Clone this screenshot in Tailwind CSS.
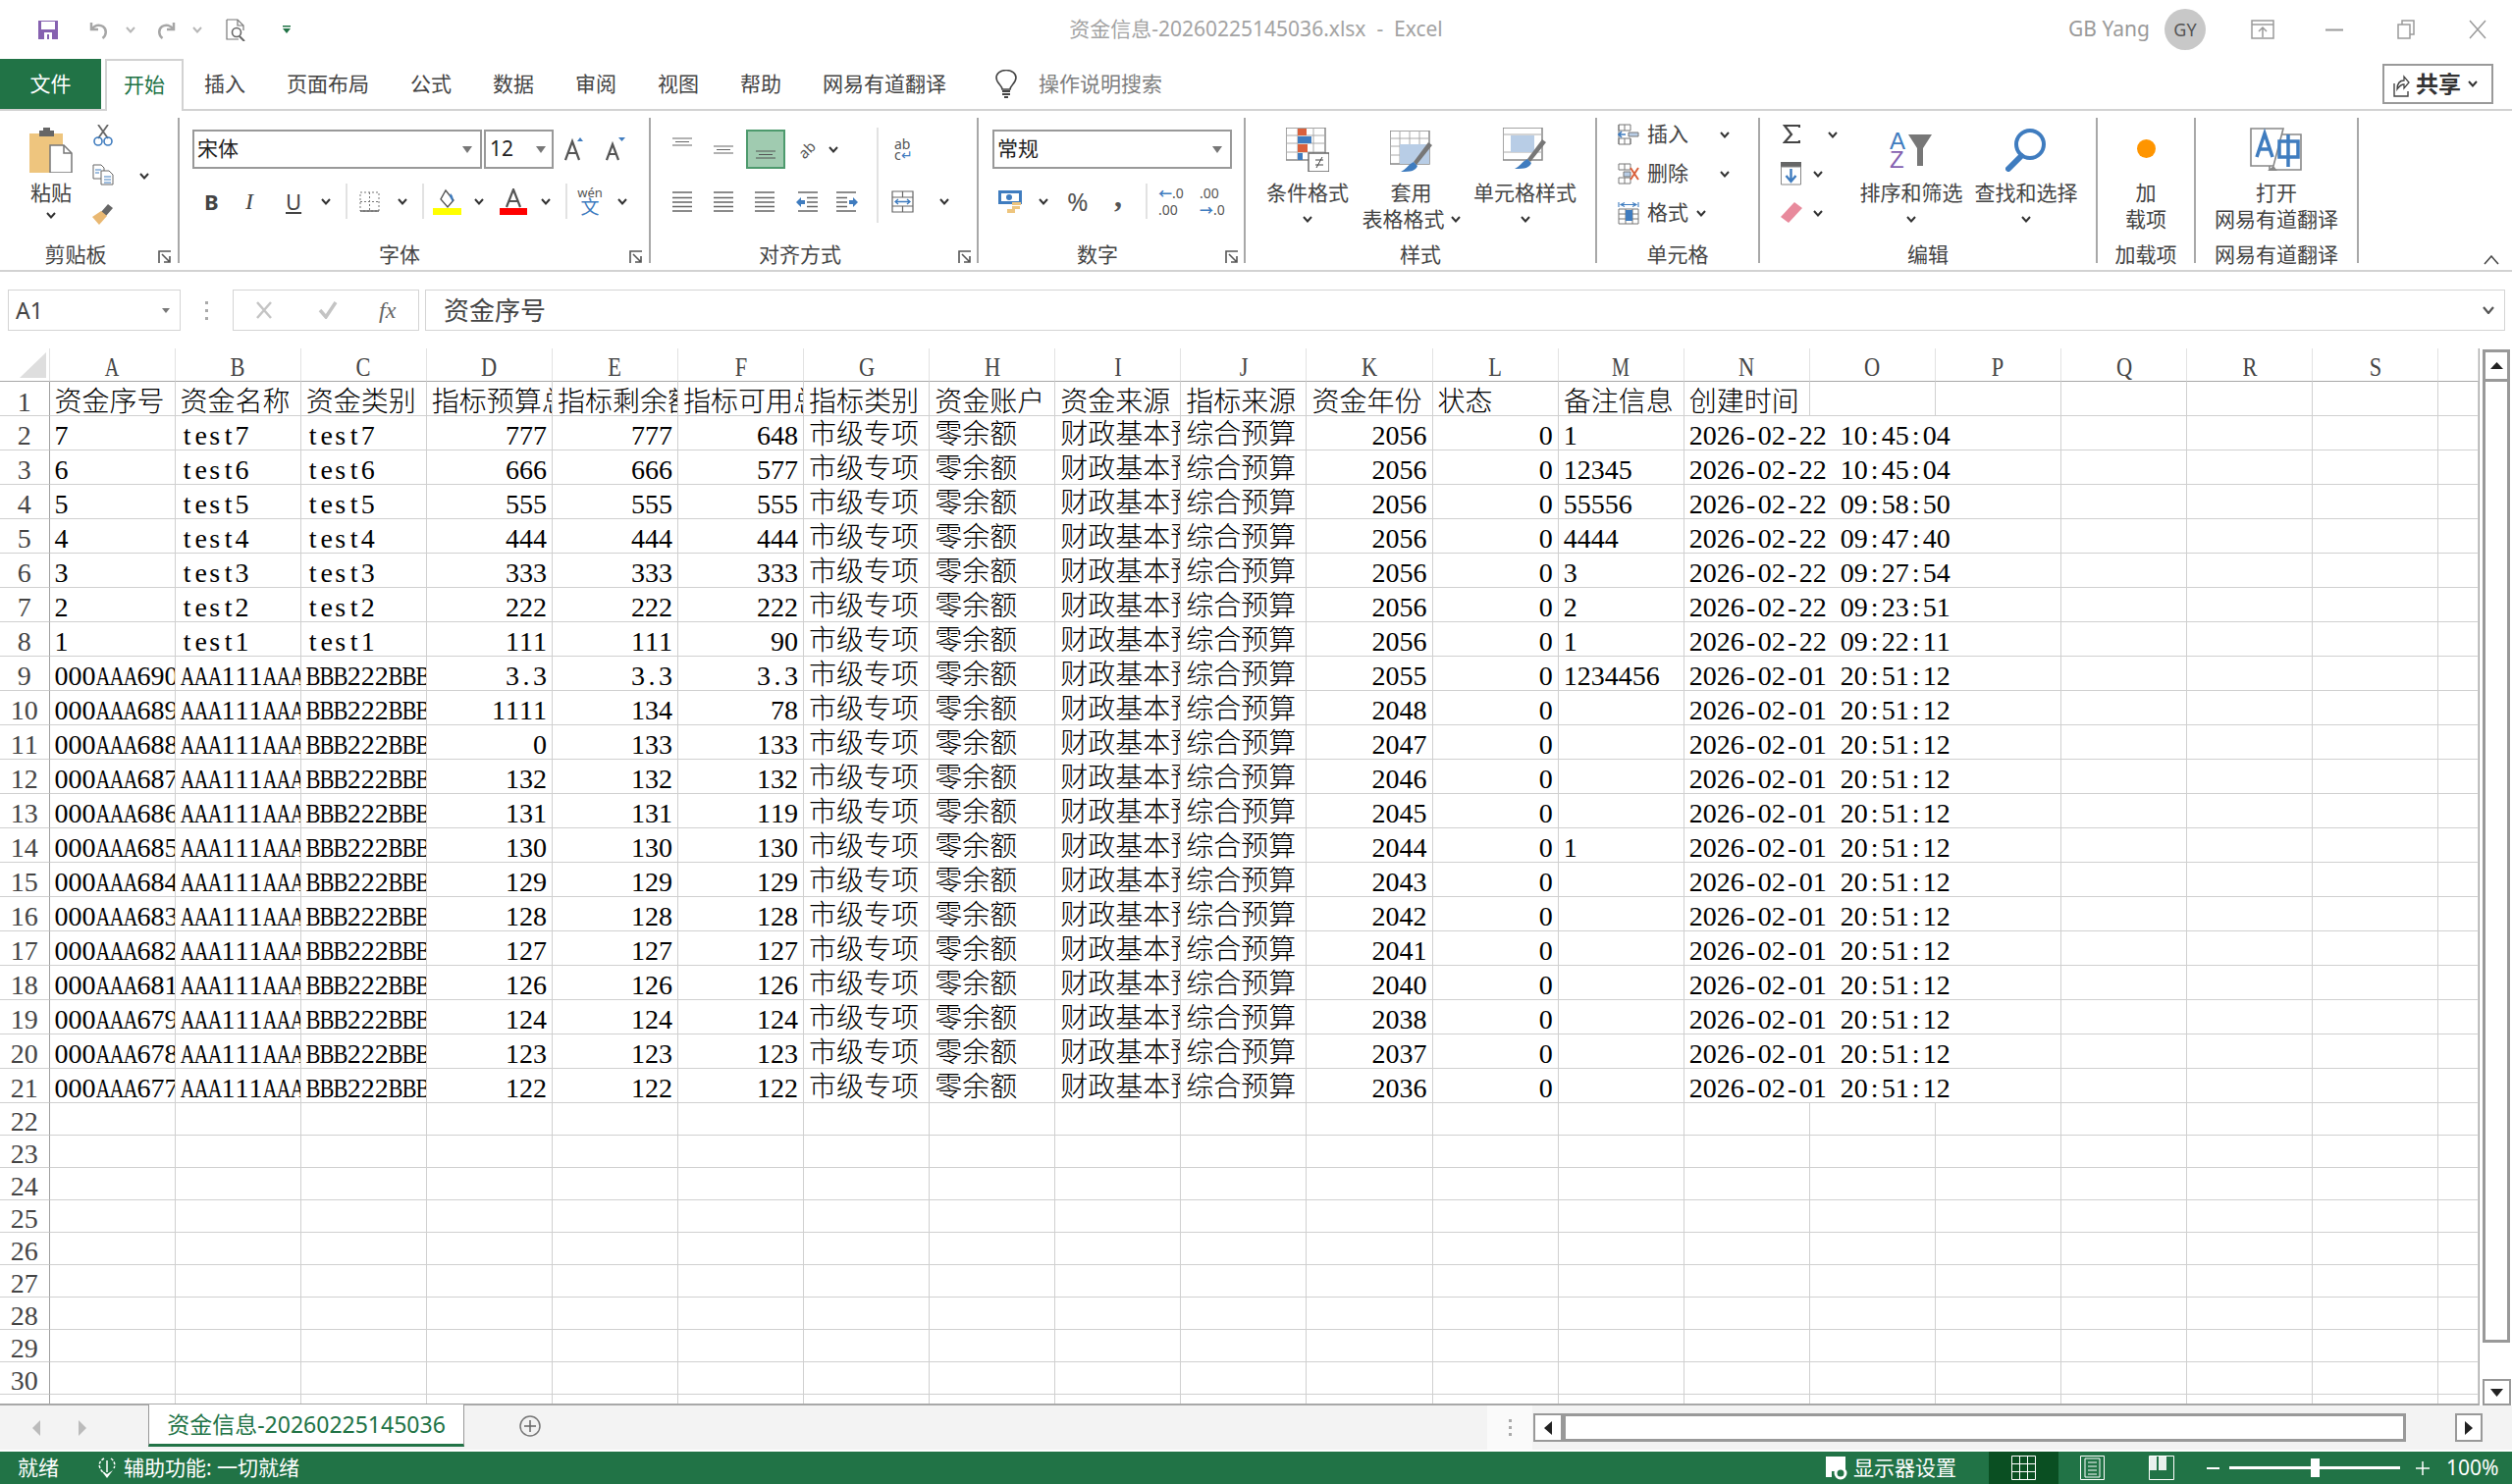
<!DOCTYPE html>
<html lang="zh-CN">
<head>
<meta charset="utf-8">
<script src="https://cdn.jsdelivr.net/npm/@tailwindcss/browser@4"></script>
<title>Excel</title>
</head>
<body class="w-[2559px] h-[1512px] overflow-hidden bg-white text-[21px] text-[#444] font-['Noto_Sans','Noto_Sans_CJK_SC',sans-serif]">
<svg class="hidden">
  <symbol id="chev" viewBox="0 0 10 7"><path d="M1 1l4 4.5L9 1" fill="none" stroke="#333" stroke-width="2"/></symbol>
  <symbol id="launch" viewBox="0 0 14 14"><path d="M1 13V1h12" fill="none" stroke="#555" stroke-width="1.600"/><path d="M4 4l8 8M12 6v6H6" fill="none" stroke="#555" stroke-width="1.600"/></symbol>
  <symbol id="lines" viewBox="0 0 20 21"><path d="M0 1h20M0 6.500h20M0 11h20M0 15.500h20M0 20h20" stroke="#666" stroke-width="1.500"/></symbol>
</svg>

<!-- title bar -->
<div class="flex h-[60px] items-center">
  <div class="flex flex-1 items-center">
    <svg class="ml-[39px] w-[20px] h-[20px]" viewBox="0 0 20 20"><path d="M0 1h20v19H0z" fill="#8661b0"/><path d="M3 2h14v8H3z" fill="#fff"/><path d="M6 13h8v7H6z" fill="#fff"/><path d="M9 15h2v5H9z" fill="#8661b0"/></svg>
    <svg class="ml-[31px] w-[21px] h-[21px]" viewBox="0 0 21 21"><path d="M3 3v7h7M3.500 10C6 5.500 11 4.500 15 7c4 3 3.500 9-.5 12" fill="none" stroke="#a6a6a6" stroke-width="2.500"/></svg>
    <svg class="ml-[17px] w-[10px] h-[7px]"><use href="#chev" opacity=".35"/></svg>
    <svg class="ml-[21px] w-[21px] h-[21px]" viewBox="0 0 21 21"><path d="M18 3v7h-7M17.500 10C15 5.500 10 4.500 6 7c-4 3-3.500 9 .5 12" fill="none" stroke="#a6a6a6" stroke-width="2.500"/></svg>
    <svg class="ml-[16px] w-[10px] h-[7px]"><use href="#chev" opacity=".35"/></svg>
    <svg class="ml-[24px] w-[23px] h-[23px]" viewBox="0 0 23 23"><path d="M1 1h11l6 6v5M1 1v20h12" fill="none" stroke="#777" stroke-width="1.200"/><path d="M12 1v6h6" fill="none" stroke="#777" stroke-width="1.200"/><circle cx="11" cy="14" r="4.500" fill="none" stroke="#666" stroke-width="1.600"/><path d="M14 18l5 5" stroke="#666" stroke-width="2"/></svg>
    <svg class="ml-[35px] w-[8px] h-[8px]" viewBox="0 0 8 8"><path d="M0 0h8v1.500H0zM0 3h8L4 8z" fill="#217346"/></svg>
  </div>
  <div class="text-[#a3a3a3] whitespace-pre">资金信息-20260225145036.xlsx  -  Excel</div>
  <div class="flex flex-1 items-center justify-end">
    <span class="text-[#9a9a9a]">GB Yang</span>
    <div class="ml-[15px] flex h-[42px] w-[42px] items-center justify-center rounded-full bg-[#c8c8c8] text-[18px] text-[#555]">GY</div>
    <svg class="ml-[46px] w-[24px] h-[20px]" viewBox="0 0 24 20"><path d="M1 1h22v18H1zM1 5h22M12 18V9M8 12l4-4 4 4" fill="none" stroke="#9a9a9a" stroke-width="1.500"/></svg>
    <svg class="ml-[52px] w-[18px] h-[3px]" viewBox="0 0 18 3"><path d="M0 1.500h18" stroke="#9a9a9a" stroke-width="2"/></svg>
    <svg class="ml-[55px] w-[18px] h-[20px]" viewBox="0 0 18 20"><path d="M1 5h12v14H1zM5 5V1h12v14h-4" fill="none" stroke="#9a9a9a" stroke-width="1.500"/></svg>
    <svg class="ml-[55px] mr-[26px] w-[18px] h-[20px]" viewBox="0 0 18 20"><path d="M1 1l16 18M17 1L1 19" fill="none" stroke="#9a9a9a" stroke-width="1.500"/></svg>
  </div>
</div>

<!-- tab row -->
<div class="relative flex h-[53px] items-start border-b-2 border-[#d2d2d2]">
  <div class="flex h-[51px] w-[103px] items-center justify-center bg-[#217346] text-white">文件</div>
  <div class="relative ml-[4px] flex h-[53px] w-[80px] items-center justify-center border-2 border-b-0 border-[#d2d2d2] bg-white pb-[2px] text-[#217346]">开始</div>
  <div class="ml-[21px] flex h-[51px] items-center gap-[42px]">
    <span>插入</span><span>页面布局</span><span>公式</span><span>数据</span><span>审阅</span><span>视图</span><span>帮助</span><span>网易有道翻译</span>
  </div>
  <div class="ml-[50px] flex h-[51px] items-center">
    <svg class="w-[22px] h-[30px]" viewBox="0 0 22 30"><path d="M7 20c0-4-6-6-6-12a10 7.500 0 0 1 20 0c0 6-6 8-6 12z" fill="none" stroke="#444" stroke-width="1.600"/><path d="M7 22h8M7 25h8M9 28h4" stroke="#444" stroke-width="2"/></svg>
    <span class="ml-[22px] text-[#808080]">操作说明搜索</span>
  </div>
  <div class="ml-auto mr-[19px] mt-[5px] flex h-[41px] w-[113px] items-center border-2 border-[#9a9a9a] pl-[8px]">
    <svg class="w-[18px] h-[26px]" viewBox="0 0 18 26"><path d="M2 12v13h14v-5" fill="none" stroke="#444" stroke-width="1.400"/><path d="M5 18c0-6 3-9 7-9V5l5 6-5 6v-4c-3 0-5 2-7 5z" fill="none" stroke="#444" stroke-width="1.300"/></svg>
    <b class="ml-[6px] font-bold text-[23px] text-[#333]">共享</b>
    <svg class="ml-[7px] w-[10px] h-[7px]"><use href="#chev"/></svg>
  </div>
</div>

<!-- ribbon -->
<div class="flex h-[164px] border-b-2 border-[#d2d2d2]">
  <!-- 剪贴板 -->
  <div class="relative flex h-[162px] w-[181px] flex-col">
    <div class="flex h-[130px]">
      <div class="ml-[10px] flex w-[84px] flex-col items-center pt-[17px]">
        <svg class="w-[44px] h-[46px]" viewBox="0 0 44 46"><path d="M0 6h34v40H0z" fill="#eec57e"/><path d="M10 3h4V0h7v3h4v6H10z" fill="#666"/><path d="M21 18h14l8 8v20H21z" fill="#fff" stroke="#777" stroke-width="1.500"/><path d="M35 18v8h8" fill="none" stroke="#777" stroke-width="1.500"/></svg>
        <span class="mt-[5px] leading-[30px]">粘贴</span>
        <svg class="mt-[5px] w-[10px] h-[7px]"><use href="#chev"/></svg>
      </div>
      <div class="flex w-[22px] flex-col gap-[18px] pt-[14px]">
        <svg class="w-[22px] h-[22px]" viewBox="0 0 22 22"><path d="M6 0l10 14M16 0L6 14" stroke="#666" stroke-width="1.800"/><circle cx="6" cy="17" r="4" fill="none" stroke="#3f7cbf" stroke-width="1.600"/><circle cx="16" cy="17" r="4" fill="none" stroke="#3f7cbf" stroke-width="1.600"/></svg>
        <svg class="w-[22px] h-[22px]" viewBox="0 0 22 22"><path d="M1 1h8l3 3v11H1z" fill="#fff" stroke="#666"/><path d="M9 7h8l4 4v10H9z" fill="#fff" stroke="#666"/><path d="M3 6h6M3 9h4M12 13h7M12 16h7M12 19h7" stroke="#3f7cbf"/></svg>
        <svg class="w-[22px] h-[22px]" viewBox="0 0 22 22"><path d="M16 1l5 4-7 8-5-4z" fill="#666"/><path d="M9 8l6 5-8 9-7-8z" fill="#e9b872"/></svg>
      </div>
      <svg class="ml-[26px] mt-[63px] w-[10px] h-[7px]"><use href="#chev"/></svg>
    </div>
    <div class="h-[32px] pr-[27px] text-center leading-[32px]">剪贴板</div>
    <svg class="absolute bottom-[6px] right-[6px] w-[14px] h-[14px]"><use href="#launch"/></svg>
  </div>
  <div class="mt-[7px] h-[148px] w-[2px] bg-[#a8a8a8]"></div>

  <!-- 字体 -->
  <div class="relative flex h-[162px] w-[478px] flex-col">
    <div class="h-[130px] pt-[19px]">
      <div class="flex h-[40px] items-center">
        <div class="ml-[13px] flex h-[40px] w-[295px] items-center justify-between border-2 border-[#999] pl-[3px] pr-[8px] text-[#222]">宋体<svg class="w-[10px] h-[7px]" viewBox="0 0 10 7"><path d="M0 0h10L5 7z" fill="#777"/></svg></div>
        <div class="ml-[2px] flex h-[40px] w-[71px] items-center justify-between border-2 border-[#999] pl-[4px] pr-[6px] text-[#222]">12<svg class="w-[10px] h-[7px]" viewBox="0 0 10 7"><path d="M0 0h10L5 7z" fill="#777"/></svg></div>
        <svg class="ml-[11px] w-[21px] h-[24px]" viewBox="0 0 21 24"><path d="M1 23L8 4l7 19M4 16h8" fill="none" stroke="#555" stroke-width="2.200"/><path d="M13 4l3-4 3 4z" fill="#3f7cbf"/></svg>
        <svg class="ml-[21px] w-[21px] h-[24px]" viewBox="0 0 21 24"><path d="M1 23L7 7l6 16M3.500 17h7" fill="none" stroke="#555" stroke-width="2.200"/><path d="M13 0h7l-3.500 4z" fill="#3f7cbf"/></svg>
      </div>
      <div class="mt-[18px] flex h-[30px] items-center">
        <b class="ml-[25px] w-[14px] font-bold text-[22px] text-[#444]">B</b>
        <i class="ml-[28px] w-[12px] font-['Liberation_Serif'] text-[24px] text-[#444]">I</i>
        <u class="ml-[29px] w-[14px] text-[22px] text-[#444]">U</u>
        <svg class="ml-[22px] w-[10px] h-[7px]"><use href="#chev"/></svg>
        <div class="ml-[15px] h-[36px] w-[2px] bg-[#e2e2e2]"></div>
        <svg class="ml-[12px] w-[21px] h-[21px]" viewBox="0 0 21 21"><path d="M1 1h19v19H1zM1 10.500h19M10.500 1v19" fill="none" stroke="#777" stroke-dasharray="2 2"/><path d="M1 20h19" stroke="#666" stroke-width="1.500"/></svg>
        <svg class="ml-[18px] w-[10px] h-[7px]"><use href="#chev"/></svg>
        <div class="ml-[15px] h-[36px] w-[2px] bg-[#e2e2e2]"></div>
        <svg class="ml-[9px] w-[29px] h-[27px]" viewBox="0 0 29 27"><path d="M13 2l8 10-6 7-7-8z" fill="#fff" stroke="#555" stroke-width="1.400"/><path d="M18 5c3 3 3 6 2 9l-3-6z" fill="#3f7cbf"/><path d="M0 20h29v7H0z" fill="#ff0"/></svg>
        <svg class="ml-[13px] w-[10px] h-[7px]"><use href="#chev"/></svg>
        <svg class="ml-[16px] w-[28px] h-[27px]" viewBox="0 0 28 27"><path d="M7 19L14 1l7 18M9 13h10" fill="none" stroke="#555" stroke-width="2.200"/><path d="M0 20h28v7H0z" fill="#f00"/></svg>
        <svg class="ml-[14px] w-[10px] h-[7px]"><use href="#chev"/></svg>
        <div class="ml-[15px] h-[36px] w-[2px] bg-[#e2e2e2]"></div>
        <div class="ml-[12px] flex w-[22px] flex-col items-center text-[13px] leading-[12px] text-[#555]">wén<span class="text-[19px] leading-[18px] text-[#3f7cbf]">文</span></div>
        <svg class="ml-[17px] w-[10px] h-[7px]"><use href="#chev"/></svg>
      </div>
    </div>
    <div class="h-[32px] pr-[30px] text-center leading-[32px]">字体</div>
    <svg class="absolute bottom-[6px] right-[6px] w-[14px] h-[14px]"><use href="#launch"/></svg>
  </div>
  <div class="mt-[7px] h-[148px] w-[2px] bg-[#a8a8a8]"></div>

  <!-- 对齐方式 -->
  <div class="relative flex h-[162px] w-[332px] flex-col">
    <div class="flex h-[130px]">
      <div class="w-[230px] pt-[19px]">
        <div class="flex h-[40px] items-center">
          <svg class="ml-[22px] mb-[16px] w-[20px] h-[9px]" viewBox="0 0 20 9"><path d="M0 1h20M3 4.500h14M0 8h20" stroke="#666" stroke-width="1.200"/></svg>
          <svg class="ml-[22px] w-[20px] h-[9px]" viewBox="0 0 20 9"><path d="M0 1h20M3 4.500h14M0 8h20" stroke="#666" stroke-width="1.200"/></svg>
          <div class="ml-[13px] flex h-[40px] w-[40px] items-end justify-center border-2 border-[#4d9a6d] bg-[#a0cbb0] pb-[8px]">
            <svg class="w-[20px] h-[9px]" viewBox="0 0 20 9"><path d="M0 1h20M3 4.500h14M0 8h20" stroke="#555" stroke-width="1.200"/></svg>
          </div>
          <div class="ml-[12px] flex h-[20px] w-[20px] items-center justify-center">
            <span class="-rotate-45 text-[15px] leading-none text-[#555]">ab</span>
          </div>
          <svg class="ml-[12px] w-[10px] h-[7px]"><use href="#chev"/></svg>
        </div>
        <div class="mt-[18px] flex h-[30px] items-center">
          <svg class="ml-[22px] w-[20px] h-[21px]"><use href="#lines"/></svg>
          <svg class="ml-[22px] w-[20px] h-[21px]"><use href="#lines"/></svg>
          <svg class="ml-[22px] w-[20px] h-[21px]"><use href="#lines"/></svg>
          <svg class="ml-[22px] w-[22px] h-[21px]" viewBox="0 0 22 21"><path d="M2 1h20M11 6.500h11M11 11h11M11 15.500h11M2 20h20" stroke="#666" stroke-width="1.500"/><path d="M0 11l5-5v3h4v4H5v3z" fill="#3f7cbf"/></svg>
          <svg class="ml-[19px] w-[23px] h-[21px]" viewBox="0 0 23 21"><path d="M0 1h20M0 6.500h11M0 11h11M0 15.500h11M0 20h20" stroke="#666" stroke-width="1.500"/><path d="M22 11l-5-5v3h-4v4h4v3z" fill="#3f7cbf"/></svg>
        </div>
      </div>
      <div class="mt-[17px] h-[97px] w-[2px] bg-[#e2e2e2]"></div>
      <div class="flex-1 pt-[19px]">
        <div class="flex h-[40px] items-center pl-[16px]">
          <div class="flex w-[20px] flex-col text-[14px] leading-[11px] text-[#555]"><span>ab</span><span>c<span class="text-[#3f7cbf]">↵</span></span></div>
        </div>
        <div class="mt-[18px] flex h-[30px] items-center pl-[13px]">
          <svg class="w-[23px] h-[23px]" viewBox="0 0 23 23"><path d="M1 1h21v21H1zM1 7h21M1 16h21M11.500 1v6M11.500 16v6" fill="none" stroke="#666" stroke-width="1.200"/><path d="M5 11.500h13M7 9l-3 2.500L7 14M16 9l3 2.500L16 14" fill="none" stroke="#3f7cbf" stroke-width="1.300"/></svg>
          <svg class="ml-[26px] w-[10px] h-[7px]"><use href="#chev"/></svg>
        </div>
      </div>
    </div>
    <div class="h-[32px] pr-[28px] text-center leading-[32px]">对齐方式</div>
    <svg class="absolute bottom-[6px] right-[5px] w-[14px] h-[14px]"><use href="#launch"/></svg>
  </div>
  <div class="mt-[7px] h-[148px] w-[2px] bg-[#a8a8a8]"></div>

  <!-- 数字 -->
  <div class="relative flex h-[162px] w-[270px] flex-col">
    <div class="h-[130px] pt-[19px]">
      <div class="ml-[14px] flex h-[40px] w-[244px] items-center justify-between border-2 border-[#999] pl-[3px] pr-[8px] text-[#222]">常规<svg class="w-[10px] h-[7px]" viewBox="0 0 10 7"><path d="M0 0h10L5 7z" fill="#777"/></svg></div>
      <div class="mt-[18px] flex h-[30px] items-center">
        <svg class="ml-[20px] w-[24px] h-[23px]" viewBox="0 0 24 23"><path d="M0 0h24v14H0z" fill="#3f7cbf"/><path d="M3 3h18v8H3z" fill="#fff"/><circle cx="11" cy="7" r="3" fill="#3f7cbf"/><path d="M14 12h9v3h-9zM14 16h8v3h-8zM9 19h8v4H9z" fill="#eec57e"/></svg>
        <svg class="ml-[17px] w-[10px] h-[7px]"><use href="#chev"/></svg>
        <span class="ml-[19px] w-[21px] text-[26px] leading-none text-[#555]">%</span>
        <b class="ml-[27px] mb-[10px] w-[10px] font-['Liberation_Serif'] text-[32px] leading-none text-[#555]">,</b>
        <div class="ml-[22px] h-[36px] w-[2px] bg-[#e2e2e2]"></div>
        <div class="ml-[11px] w-[24px] text-[14px] leading-[17px] text-[#555]"><span class="font-bold text-[#3f7cbf]">←</span>.0<br>.00</div>
        <div class="ml-[18px] w-[24px] text-[14px] leading-[17px] text-[#555]">.00<br><span class="font-bold text-[#3f7cbf]">→</span>.0</div>
      </div>
    </div>
    <div class="h-[32px] pr-[28px] text-center leading-[32px]">数字</div>
    <svg class="absolute bottom-[6px] right-[5px] w-[14px] h-[14px]"><use href="#launch"/></svg>
  </div>
  <div class="mt-[7px] h-[148px] w-[2px] bg-[#a8a8a8]"></div>

  <!-- 样式 -->
  <div class="flex h-[162px] w-[356px] flex-col">
    <div class="flex h-[130px] pt-[17px] leading-[27px]">
      <div class="ml-[20px] flex w-[86px] flex-col items-center">
        <svg class="w-[44px] h-[45px]" viewBox="0 0 44 45"><path d="M0 0h40v33H0z" fill="#fff" stroke="#888" stroke-width="1.500"/><path d="M0 8h40M0 16h40M0 25h40M12 0v33M28 0v33" stroke="#aaa"/><path d="M12 1h9v7h-9zM12 17h10v8H12z" fill="#d9603c"/><path d="M12 9h14v7H12zM12 26h5v7h-5z" fill="#3f7cbf"/><path d="M23 26h21v19H23z" fill="#fff" stroke="#666" stroke-width="1.400"/><path d="M30 33h8M30 38h8M37 30l-6 11" stroke="#444"/></svg>
        <span class="mt-[8px]">条件格式</span>
        <svg class="mt-[10px] w-[10px] h-[7px]"><use href="#chev"/></svg>
      </div>
      <div class="ml-[10px] flex w-[105px] flex-col items-center">
        <svg class="mt-[3px] w-[44px] h-[42px]" viewBox="0 0 44 42"><path d="M0 0h40v34H0z" fill="#fff" stroke="#888" stroke-width="1.500"/><path d="M0 8h40M0 16h40M0 25h40M10 0v34M20 0v34M30 0v34" stroke="#aaa"/><path d="M10 14h30v20H10z" fill="#b8cde6"/><path d="M43 15l-16 20-3-3 15-20z" fill="#777"/><path d="M24 32l4 4c-2 5-6 6-17 6 5-2 7-7 13-10z" fill="#3f7cbf"/></svg>
        <span class="mt-[8px]">套用</span>
        <div class="flex items-center"><span>表格格式</span><svg class="ml-[6px] w-[10px] h-[7px]"><use href="#chev"/></svg></div>
      </div>
      <div class="ml-[11px] flex w-[105px] flex-col items-center">
        <svg class="w-[45px] h-[45px]" viewBox="0 0 45 45"><path d="M0 0h40v33H0z" fill="#fff" stroke="#888" stroke-width="1.500"/><path d="M0 7h40M0 25h40" stroke="#aaa"/><path d="M8 8h24v17H8z" fill="#b8cde6"/><path d="M44 15L28 35l-3-3 15-20z" fill="#777"/><path d="M25 32l4 4c-2 5-6 6-17 6 5-2 7-7 13-10z" fill="#3f7cbf"/></svg>
        <span class="mt-[8px]">单元格样式</span>
        <svg class="mt-[10px] w-[10px] h-[7px]"><use href="#chev"/></svg>
      </div>
    </div>
    <div class="h-[32px] text-center leading-[32px]">样式</div>
  </div>
  <div class="mt-[7px] h-[148px] w-[2px] bg-[#a8a8a8]"></div>

  <!-- 单元格 -->
  <div class="flex h-[162px] w-[164px] flex-col">
    <div class="h-[130px] pt-[4px]">
      <div class="flex h-[40px] items-center">
        <svg class="ml-[21px] w-[22px] h-[22px]" viewBox="0 0 22 22"><path d="M1 1h12v6H1zM1 15h12v6H1zM1 1v20M7 1v6M7 15v6M13 15v6" fill="none" stroke="#777"/><path d="M11 9h10v4H11z" fill="#b8cde6" stroke="#777"/><path d="M1 11h7M4 8l-3 3 3 3" fill="none" stroke="#3f7cbf" stroke-width="1.600"/></svg>
        <span class="ml-[8px] w-[42px]">插入</span>
        <svg class="ml-[32px] w-[10px] h-[7px]"><use href="#chev"/></svg>
      </div>
      <div class="flex h-[40px] items-center">
        <svg class="ml-[21px] w-[22px] h-[22px]" viewBox="0 0 22 22"><path d="M1 1h12v6H1zM1 15h12v6H1zM7 1v6M7 15v6" fill="none" stroke="#777"/><path d="M6 9h7v5H6z" fill="#b8cde6" stroke="#777"/><path d="M13 5l8 12M21 5l-8 12" stroke="#d9603c" stroke-width="2"/></svg>
        <span class="ml-[8px] w-[42px]">删除</span>
        <svg class="ml-[32px] w-[10px] h-[7px]"><use href="#chev"/></svg>
      </div>
      <div class="flex h-[40px] items-center">
        <svg class="ml-[21px] w-[22px] h-[24px]" viewBox="0 0 22 24"><path d="M1 1v5M21 1v5M3 3.500h16M7 1.500L3 3.500l4 2M15 1.500l4 2-4 2" fill="none" stroke="#3f7cbf" stroke-width="1.100"/><path d="M1 8h20v15H1zM1 13h20M1 18h20M8 8v15M15 8v15" fill="none" stroke="#777"/><path d="M8 9h7v11H8z" fill="#3f7cbf"/></svg>
        <span class="ml-[8px] w-[42px]">格式</span>
        <svg class="ml-[8px] w-[10px] h-[7px]"><use href="#chev"/></svg>
      </div>
    </div>
    <div class="h-[32px] text-center leading-[32px]">单元格</div>
  </div>
  <div class="mt-[7px] h-[148px] w-[2px] bg-[#a8a8a8]"></div>

  <!-- 编辑 -->
  <div class="flex h-[162px] w-[342px] flex-col">
    <div class="flex h-[130px]">
      <div class="w-[101px] pt-[4px]">
        <div class="flex h-[40px] items-center">
          <svg class="ml-[23px] w-[18px] h-[20px]" viewBox="0 0 18 20"><path d="M17 3V1H2l7 9-7 8h15v-2" fill="none" stroke="#444" stroke-width="2.200"/></svg>
          <svg class="ml-[28px] w-[10px] h-[7px]"><use href="#chev"/></svg>
        </div>
        <div class="flex h-[40px] items-center">
          <svg class="ml-[21px] w-[21px] h-[24px]" viewBox="0 0 21 24"><path d="M0 0h21v5H0z" fill="#666"/><path d="M.5 5h20v18H.5z" fill="#fff" stroke="#888"/><path d="M10.500 7v13M5.500 14l5 6 5-6" fill="none" stroke="#3f7cbf" stroke-width="2.400"/></svg>
          <svg class="ml-[12px] w-[10px] h-[7px]"><use href="#chev"/></svg>
        </div>
        <div class="flex h-[40px] items-center">
          <svg class="ml-[21px] w-[22px] h-[22px]" viewBox="0 0 22 22"><path d="M14 0l8 6L8 21l-8-6z" fill="#e88a9c"/></svg>
          <svg class="ml-[11px] w-[10px] h-[7px]"><use href="#chev"/></svg>
        </div>
      </div>
      <div class="flex w-[106px] flex-col items-center pt-[17px] leading-[27px]">
        <div class="flex h-[45px] w-[44px] items-center">
          <div class="flex w-[18px] flex-col text-[24px] font-['Liberation_Sans'] leading-[19px]"><span class="text-[#3f7cbf]">A</span><span class="text-[#8661b0]">Z</span></div>
          <svg class="ml-[1px] w-[24px] h-[32px]" viewBox="0 0 24 32"><path d="M0 0h24L15 14v18H9V14z" fill="#777"/></svg>
        </div>
        <span class="mt-[8px] whitespace-nowrap">排序和筛选</span>
        <svg class="mt-[10px] w-[10px] h-[7px]"><use href="#chev"/></svg>
      </div>
      <div class="ml-[11px] flex w-[106px] flex-col items-center pt-[17px] leading-[27px]">
        <svg class="w-[42px] h-[45px]" viewBox="0 0 42 45"><circle cx="25" cy="17" r="14" fill="none" stroke="#3f7cbf" stroke-width="4"/><path d="M16 29L3 42" stroke="#3f7cbf" stroke-width="6" stroke-linecap="round"/></svg>
        <span class="mt-[8px] whitespace-nowrap">查找和选择</span>
        <svg class="mt-[10px] w-[10px] h-[7px]"><use href="#chev"/></svg>
      </div>
    </div>
    <div class="h-[32px] text-center leading-[32px]">编辑</div>
  </div>
  <div class="mt-[7px] h-[148px] w-[2px] bg-[#a8a8a8]"></div>

  <!-- 加载项 -->
  <div class="flex h-[162px] w-[98px] flex-col">
    <div class="flex h-[130px] flex-col items-center pt-[17px] leading-[27px]">
      <div class="flex h-[45px] items-center"><div class="mt-[-3px] h-[19px] w-[19px] rounded-full bg-[#ff9500]"></div></div>
      <span class="mt-[8px]">加</span><span>载项</span>
    </div>
    <div class="h-[32px] text-center leading-[32px]">加载项</div>
  </div>
  <div class="mt-[7px] h-[148px] w-[2px] bg-[#a8a8a8]"></div>

  <!-- 网易有道翻译 -->
  <div class="flex h-[162px] w-[164px] flex-col">
    <div class="flex h-[130px] flex-col items-center pt-[17px] leading-[27px]">
      <svg class="w-[54px] h-[45px]" viewBox="0 0 54 45"><path d="M20 7h32v36H20z" fill="#fff" stroke="#888" stroke-width="1.600"/><path d="M1 1h33l-10 38H1z" fill="#fff" stroke="#888" stroke-width="1.600"/><path d="M24 39l-6 5h10z" fill="#888"/><path d="M30 14h19v16H30zM39 7v33" fill="none" stroke="#3f7cbf" stroke-width="3.500"/><path d="M7 30l8-24 8 24M10 22h10" fill="none" stroke="#3f7cbf" stroke-width="3.500"/></svg>
      <span class="mt-[8px]">打开</span><span class="whitespace-nowrap">网易有道翻译</span>
    </div>
    <div class="h-[32px] text-center leading-[32px] whitespace-nowrap">网易有道翻译</div>
  </div>
  <div class="mt-[7px] h-[148px] w-[2px] bg-[#a8a8a8]"></div>
  <div class="relative flex-1">
    <svg class="absolute bottom-[5px] right-[13px] w-[16px] h-[10px]" viewBox="0 0 16 10"><path d="M1 9l7-8 7 8" fill="none" stroke="#444" stroke-width="1.500"/></svg>
  </div>
</div>

<!-- formula bar -->
<div class="flex h-[78px] pt-[18px] pb-[18px] pl-[8px] pr-[7px] text-[#555]">
  <div class="flex h-[42px] w-[176px] items-center justify-between border border-[#d4d4d4] pl-[7px] pr-[10px] text-[23px] text-[#444]">A1<svg class="w-[8px] h-[5px]" viewBox="0 0 8 5"><path d="M0 0h8L4 5z" fill="#777"/></svg></div>
  <div class="flex w-[53px] flex-col items-center justify-center gap-[5px]"><i class="h-[3px] w-[3px] bg-[#aaa]"></i><i class="h-[3px] w-[3px] bg-[#aaa]"></i><i class="h-[3px] w-[3px] bg-[#aaa]"></i></div>
  <div class="flex h-[42px] w-[190px] items-center border border-[#d4d4d4]">
    <svg class="ml-[22px] w-[18px] h-[18px]" viewBox="0 0 18 18"><path d="M2 1l14 16M16 1L2 17" stroke="#c4c4c4" stroke-width="2.500"/></svg>
    <svg class="ml-[46px] w-[20px] h-[18px]" viewBox="0 0 20 18"><path d="M2 9l6 7L18 1" fill="none" stroke="#c4c4c4" stroke-width="3.500"/></svg>
    <i class="ml-[42px] font-['Liberation_Serif'] text-[24px] text-[#666]">fx</i>
  </div>
  <div class="ml-[6px] flex h-[42px] flex-1 items-center justify-between border border-[#d4d4d4] pl-[18px] pr-[10px] text-[26px] text-[#444]">资金序号<svg class="w-[12px] h-[8px]" viewBox="0 0 12 8"><path d="M1 1l5 6 5-6" fill="none" stroke="#555" stroke-width="2.200"/></svg></div>
</div>

<!-- sheet -->
<div class="flex h-[1077px]">
  <div id="grid" class="grid h-[1077px] w-[2526px] grid-cols-[50.5px_repeat(19,128.1px)_1fr] content-start overflow-hidden border-r border-b-2 border-[#a8a8a8] font-['Liberation_Serif','Noto_Sans_CJK_SC',serif] text-[28px] font-light text-black"></div>
  <div class="flex w-[33px] flex-col pl-[3px]">
    <div class="mt-[1px] flex h-[30px] w-[28px] items-center justify-center border-[3px] border-b-0 border-[#999]"><svg class="w-[13px] h-[7px]" viewBox="0 0 13 7"><path d="M0 7h13L6.500 0z" fill="#222"/></svg></div>
    <div class="h-[983px] w-[28px] border-[3px] border-[#999] bg-white"></div>
    <div class="mt-[37px] flex h-[27px] w-[29px] items-center justify-center border-[2px] border-[#999]"><svg class="w-[13px] h-[8px]" viewBox="0 0 13 8"><path d="M0 0h13L6.500 8z" fill="#222"/></svg></div>
  </div>
</div>

<!-- sheet tabs -->
<div class="flex h-[45px] bg-[#f3f3f3]">
  <div class="flex w-[151px] items-center">
    <svg class="ml-[33px] w-[9px] h-[16px]" viewBox="0 0 9 16"><path d="M8 0v16L0 8z" fill="#bbb"/></svg>
    <svg class="ml-[37px] w-[9px] h-[16px]" viewBox="0 0 9 16"><path d="M1 0v16l8-8z" fill="#bbb"/></svg>
  </div>
  <div class="mt-[-1px] flex h-[43px] w-[322px] items-center justify-center border-b-[3px] border-x border-[#217346] border-x-[#999] bg-white text-[23px] text-[#217346]">资金信息-20260225145036</div>
  <div class="flex w-[1042px] items-start pt-[10px]">
    <svg class="ml-[56px] w-[22px] h-[22px]" viewBox="0 0 22 22"><circle cx="11" cy="11" r="10" fill="none" stroke="#777" stroke-width="1.500"/><path d="M11 5v12M5 11h12" stroke="#666" stroke-width="1.500"/></svg>
  </div>
  <div class="flex h-[45px] w-[46px] flex-col items-center justify-center gap-[4px] bg-[#fafafa]"><i class="h-[3px] w-[3px] bg-[#aaa]"></i><i class="h-[3px] w-[3px] bg-[#aaa]"></i><i class="h-[3px] w-[3px] bg-[#aaa]"></i></div>
  <div class="ml-[1px] mt-[8px] flex h-[29px] w-[30px] items-center justify-center border-[2px] border-[#999] bg-white"><svg class="w-[8px] h-[14px]" viewBox="0 0 8 14"><path d="M8 0v14L0 7z" fill="#222"/></svg></div>
  <div class="mt-[8px] h-[29px] w-[859px] border-[3px] border-[#999] bg-white"></div>
  <div class="ml-[50px] mt-[8px] flex h-[29px] w-[28px] items-center justify-center border-[2px] border-[#999] bg-white"><svg class="w-[8px] h-[14px]" viewBox="0 0 8 14"><path d="M0 0v14l8-7z" fill="#222"/></svg></div>
</div>

<!-- status bar -->
<div class="mt-[2px] flex h-[33px] items-center bg-[#217346] text-white">
  <span class="ml-[18px]">就绪</span>
  <svg class="ml-[40px] w-[19px] h-[24px]" viewBox="0 0 19 24"><path d="M6 2C2 4 0 8 2 12s4 5 5 5M13 2c3 2 5 6 3 10" fill="none" stroke="#fff" stroke-width="1.500" stroke-dasharray="3 1.500"/><path d="M3 14l6 8 6-8-6 4z" fill="#fff"/><path d="M9 4v12" stroke="#fff" stroke-width="1.500"/></svg>
  <span class="ml-[7px]">辅助功能: 一切就绪</span>
  <svg class="ml-auto w-[22px] h-[24px]" viewBox="0 0 22 24"><path d="M0 0h20v15H6v6H0z" fill="#fff"/><circle cx="15" cy="17" r="5" fill="#217346" stroke="#fff" stroke-width="3"/></svg>
  <span class="ml-[6px] w-[105px]">显示器设置</span>
  <div class="ml-[33px] flex h-[33px] w-[71px] items-center justify-center bg-[#0a4f22]"><svg class="w-[25px] h-[25px]" viewBox="0 0 25 25"><path d="M.5.500h24v24H.5zM.5 8.500h24M.5 16.500h24M8.500.500v24M16.500.500v24" fill="none" stroke="#fff"/></svg></div>
  <svg class="ml-[22px] w-[25px] h-[25px]" viewBox="0 0 25 25"><path d="M.5.500h24v24H.5zM5 3h15v19H5z" fill="none" stroke="#fff"/><path d="M8 7h9M8 11h9M8 15h9M8 19h9" stroke="#fff"/></svg>
  <svg class="ml-[45px] w-[26px] h-[25px]" viewBox="0 0 26 25"><path d="M.5.500h25v24H.5z" fill="none" stroke="#fff"/><path d="M1 1h7v14H1zM10 1h8v14h-8z" fill="#fff" opacity=".9"/></svg>
  <span class="ml-[33px] h-[2px] w-[13px] bg-white"></span>
  <div class="relative ml-[10px] h-[3px] w-[174px] bg-white"><div class="absolute left-[83px] top-[-8px] h-[19px] w-[9px] bg-white"></div></div>
  <svg class="ml-[16px] w-[14px] h-[14px]" viewBox="0 0 14 14"><path d="M7 0v14M0 7h14" stroke="#fff" stroke-width="1.500"/></svg>
  <span class="ml-[17px] w-[67px] whitespace-nowrap">100%</span>
</div>

<script>
const LC = 'inline-flex w-[14px] justify-center';
const WIDE = 'inline-flex w-[14px] justify-center scale-x-[.72]';
const MID = 'inline-flex w-[14px] justify-center scale-x-[.8]';
const esc = s => s.replace(/[\x20-\x7e]/g, c => c === ' '
  ? '<span class="' + LC + '">&nbsp;</span>'
  : '<span class="' + (c === 'A' || c === 'M' ? WIDE : /[A-Z]/.test(c) ? MID : LC) + '">' + c + '</span>');
const C = 'overflow-hidden whitespace-nowrap border-r border-b border-[#d0d0d0]';
const LEFT = 'pl-[5px]';
const RIGHT = 'pr-[5px] text-right';
const TXT = 'leading-[40px]';
const CJK = 'leading-[38px]';
const CJKH = 'leading-[41px]';
const HEAD = 'h-[34px] overflow-hidden border-r border-b border-r-[#e2e2e2] border-b-[#a8a8a8] text-center leading-[38px] text-[#444]';
const NUM = 'overflow-hidden border-r border-b border-r-[#a0a0a0] border-b-[#d0d0d0] text-center text-[#444]';
const LET = 'ABCDEFGHIJKLMNOPQRS';
const A = ['7','6','5','4','3','2','1','000AAA690','000AAA689','000AAA688','000AAA687','000AAA686','000AAA685','000AAA684','000AAA683','000AAA682','000AAA681','000AAA679','000AAA678','000AAA677'];
const D = '777,666,555,444,333,222,111,3.3,1111,0,132,131,130,129,128,127,126,124,123,122'.split(',');
const E = '777,666,555,444,333,222,111,3.3,134,133,132,131,130,129,128,127,126,124,123,122'.split(',');
const F = '648,577,555,444,333,222,90,3.3,78,133,132,119,130,129,128,127,126,124,123,122'.split(',');
const K = '2056,2056,2056,2056,2056,2056,2056,2055,2048,2047,2046,2045,2044,2043,2042,2041,2040,2038,2037,2036'.split(',');
const M = '1,12345,55556,4444,3,2,1,1234456,,,,,1,,,,,,,'.split(',');
const T = ['2026-02-22 10:45:04','2026-02-22 10:45:04','2026-02-22 09:58:50','2026-02-22 09:47:40','2026-02-22 09:27:54','2026-02-22 09:23:51','2026-02-22 09:22:11'];
let h = '<div class="' + HEAD + ' relative"><svg class="absolute left-[20px] top-[4px] w-[27px] h-[26px]" viewBox="0 0 27 26"><path d="M27 0v26H0z" fill="#dedede"/></svg></div>';
for (const l of LET) h += '<div class="' + HEAD + '">' + esc(l) + '</div>';
h += '<div class="' + HEAD + '"></div>';
const rowNum = (n, ht) => '<div class="' + NUM + ' ' + ht + '">' + esc(String(n)) + '</div>';
const H1 = ['资金序号','资金名称','资金类别','指标预算总额','指标剩余额度','指标可用总额','指标类别','资金账户','资金来源','指标来源','资金年份','状态','备注信息','创建时间'];
h += rowNum(1, 'h-[35px] leading-[41px]');
for (const t of H1) h += '<div class="h-[35px] ' + C + ' ' + LEFT + ' ' + CJKH + '">' + t + '</div>';
for (let i = 0; i < 6; i++) h += '<div class="h-[35px] ' + C + '"></div>';
for (let r = 0; r < 20; r++) {
  const a = r < 7 ? 'test' + A[r] : 'AAA111AAA';
  const b = r < 7 ? 'test' + A[r] : 'BBB222BBB';
  h += rowNum(r + 2, 'h-[35px] leading-[40px]');
  const row = [[A[r], LEFT], [a, LEFT], [b, LEFT], [D[r], RIGHT], [E[r], RIGHT], [F[r], RIGHT]];
  for (const [t, al] of row) h += '<div class="h-[35px] ' + C + ' ' + al + ' ' + TXT + '">' + esc(t) + '</div>';
  for (const t of ['市级专项','零余额','财政基本预算','综合预算']) h += '<div class="h-[35px] ' + C + ' ' + LEFT + ' ' + CJK + '">' + t + '</div>';
  h += '<div class="h-[35px] ' + C + ' ' + RIGHT + ' ' + TXT + '">' + esc(K[r]) + '</div>';
  h += '<div class="h-[35px] ' + C + ' ' + RIGHT + ' ' + TXT + '">' + esc('0') + '</div>';
  h += '<div class="h-[35px] ' + C + ' ' + LEFT + ' ' + TXT + '">' + esc(M[r] || '') + '</div>';
  h += '<div class="h-[35px] col-span-3 ' + C + ' ' + LEFT + ' ' + TXT + '">' + esc(T[r] || '2026-02-01 20:51:12') + '</div>';
  for (let i = 0; i < 4; i++) h += '<div class="h-[35px] ' + C + '"></div>';
}
for (let n = 22; n <= 31; n++) {
  h += rowNum(n, 'h-[33px] leading-[38px]');
  for (let i = 0; i < 20; i++) h += '<div class="h-[33px] ' + C + '"></div>';
}
document.getElementById('grid').innerHTML = h;
</script>
</body>
</html>
